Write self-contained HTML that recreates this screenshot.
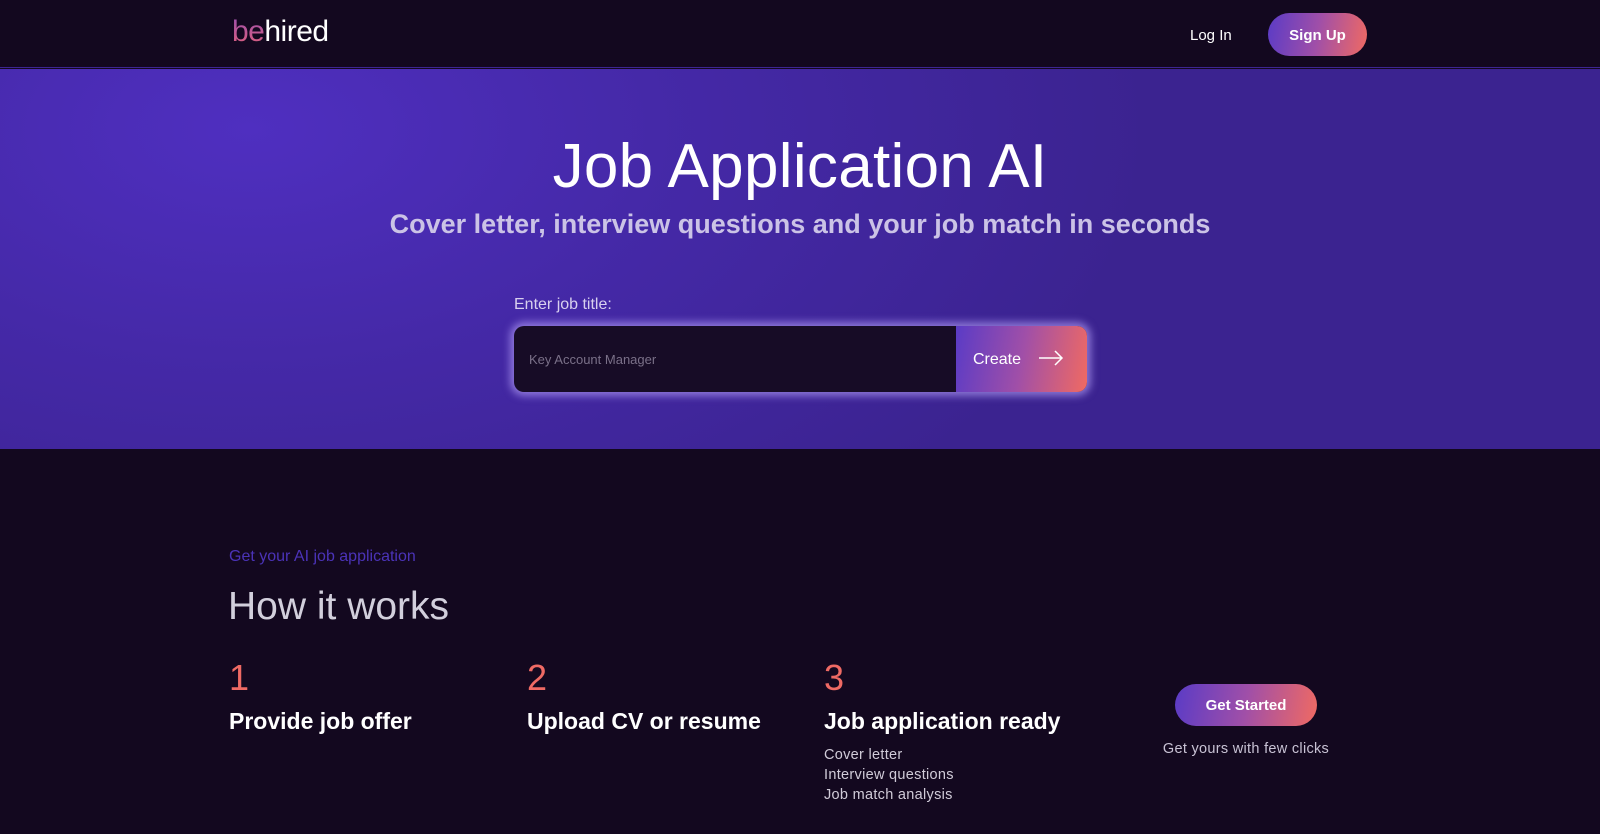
<!DOCTYPE html>
<html><head><meta charset="utf-8"><style>
*{margin:0;padding:0;box-sizing:border-box}
body{width:1600px;height:834px;overflow:hidden;background:#13081f;font-family:"Liberation Sans",sans-serif;color:#fff;position:relative}
.a{position:absolute;white-space:nowrap}
.hdr{position:absolute;left:0;top:0;width:1600px;height:68px;background:#13081f;border-bottom:1px solid #3d2590}
.hero{position:absolute;left:0;top:69px;width:1600px;height:380px;background:radial-gradient(ellipse 900px 500px at 250px 60px,#4f2fc0 0%,#4529a8 45%,#3b2390 100%)}
.grad{background:linear-gradient(100deg,#5a3bc6 0%,#a04fa8 50%,#f06a62 100%)}
</style></head><body>
<div class="hdr"></div>
<div class="a" style="left:232px;top:15px;font-size:30px;letter-spacing:-0.5px"><span style="background:linear-gradient(180deg,#9a4fb0,#e0607a);-webkit-background-clip:text;color:transparent">be</span>hired</div>
<div class="a" style="left:1190px;top:27px;font-size:15px">Log In</div>
<div class="a grad" style="left:1268px;top:13px;width:99px;height:43px;border-radius:22px;font-size:15px;font-weight:bold;text-align:center;line-height:45px">Sign Up</div>
<div class="hero"></div>
<div class="a" style="left:0;width:1600px;text-align:center;top:132px;font-size:62px;line-height:70px;letter-spacing:0.3px">Job Application AI</div>
<div class="a" style="left:0;width:1600px;text-align:center;top:209px;font-size:27px;color:#cbc3e6;font-weight:bold">Cover letter, interview questions and your job match in seconds</div>
<div class="a" style="left:514px;top:296px;font-size:16px;color:#d8d0ee">Enter job title:</div>
<div class="a" style="left:514px;top:326px;width:573px;height:66px;border-radius:10px;background:#170c26;box-shadow:0 0 8px 4px rgba(190,170,255,.6);overflow:hidden">
<div class="a" style="left:15px;top:26px;font-size:13px;color:#7a7088">Key Account Manager</div>
<div class="a grad" style="left:442px;top:0;width:131px;height:66px"><span class="a" style="left:17px;top:25px;font-size:16px">Create</span>
<svg class="a" style="left:82px;top:24px" width="26" height="16" viewBox="0 0 26 16"><path d="M1 8H24M17 1L24 8L17 15" stroke="#fff" stroke-width="1.5" fill="none"/></svg></div></div>
<div class="a" style="left:229px;top:548px;font-size:16px;color:#4b33b8">Get your AI job application</div>
<div class="a" style="left:228px;top:585px;font-size:39px;color:#d2cfdc">How it works</div>
<div class="a" style="left:229px;top:657px;font-size:36px;color:#ef6a64">1</div>
<div class="a" style="left:527px;top:657px;font-size:36px;color:#ef6a64">2</div>
<div class="a" style="left:824px;top:657px;font-size:36px;color:#ef6a64">3</div>
<div class="a" style="left:229px;top:708px;font-size:23px;font-weight:bold">Provide job offer</div>
<div class="a" style="left:527px;top:708px;font-size:23px;font-weight:bold">Upload CV or resume</div>
<div class="a" style="left:824px;top:708px;font-size:23px;font-weight:bold">Job application ready</div>
<div class="a" style="left:824px;top:745px;font-size:14.5px;color:#d0cbd8;line-height:20px;letter-spacing:0.3px">Cover letter<br>Interview questions<br>Job match analysis</div>
<div class="a grad" style="left:1175px;top:684px;width:142px;height:42px;border-radius:21px;font-size:15px;font-weight:bold;text-align:center;line-height:44px">Get Started</div>
<div class="a" style="left:1146px;top:741px;width:200px;text-align:center;font-size:14.5px;color:#c8c2d4;letter-spacing:0.3px">Get yours with few clicks</div>
</body></html>
